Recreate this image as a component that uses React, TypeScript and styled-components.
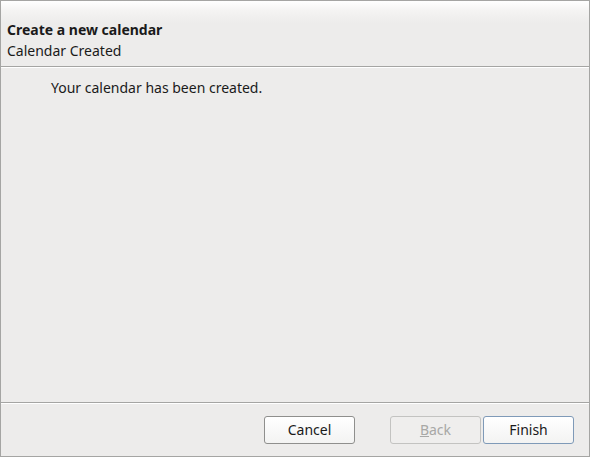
import styled, { createGlobalStyle } from "styled-components";

const GlobalStyle = createGlobalStyle`
  html, body {
    margin: 0;
    padding: 0;
    background: #edeceb;
  }
  * {
    box-sizing: border-box;
  }
`;

const Window = styled.div`
  width: 590px;
  height: 457px;
  display: flex;
  flex-direction: column;
  background: #edeceb;
  border: 1px solid #a5a5a3;
  font-family: "Noto Sans", "Open Sans", sans-serif;
  font-size: 14px;
  color: #1a1a1a;
`;

const Header = styled.header`
  height: 66px;
  padding: 19px 6px 0 6px;
  background: linear-gradient(to bottom, #ffffff 0px, #f4f3f2 10px, #edeceb 22px);
  border-bottom: 1px solid #a5a5a3;
  display: flex;
  flex-direction: column;
`;

const Title = styled.div`
  font-weight: bold;
  line-height: 20px;
`;

const Subtitle = styled.div`
  line-height: 20px;
  margin-top: 1px;
`;

const Body = styled.section`
  flex: 1;
  border-top: 1px solid #ffffff;
  padding: 10px 50px;
  line-height: 20px;
`;

const Footer = styled.footer`
  height: 54px;
  border-top: 1px solid #a5a5a3;
  box-shadow: inset 0 1px 0 #ffffff;
  display: flex;
  align-items: flex-start;
  justify-content: flex-end;
  padding: 13px 15px 0 0;
`;

const Button = styled.button<{ $default?: boolean; $gap?: number }>`
  width: 91px;
  height: 28px;
  margin-left: ${({ $gap }) => $gap ?? 0}px;
  border-radius: 3px;
  border: 1px solid ${({ $default }) => ($default ? "#7f9ab8" : "#8f8f8d")};
  background: linear-gradient(to bottom, #ffffff, #f3f3f2);
  font-family: inherit;
  font-size: 14px;
  color: #1a1a1a;
  padding: 0 0 2px 0;

  &:disabled {
    border-color: #c3c3c1;
    background: #efeeed;
    color: #a8a8a6;
  }
`;

const App = () => {
  return (
    <>
      <GlobalStyle />
      <Window>
        <Header>
          <Title>Create a new calendar</Title>
          <Subtitle>Calendar Created</Subtitle>
        </Header>
        <Body>Your calendar has been created.</Body>
        <Footer>
          <Button>Cancel</Button>
          <Button disabled $gap={35}>
            <u>B</u>ack
          </Button>
          <Button $default $gap={2}>
            Finish
          </Button>
        </Footer>
      </Window>
    </>
  );
};

export default App;
